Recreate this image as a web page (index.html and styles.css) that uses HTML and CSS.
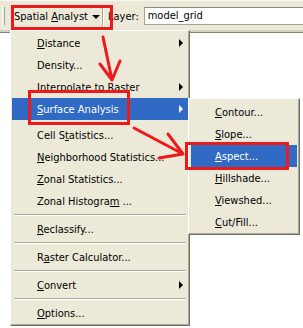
FILE: index.html
```html
<!DOCTYPE html>
<html lang="en">
<head>
    <meta charset="UTF-8">
    <title>Spatial Analyst menu</title>
    <link rel="stylesheet" href="styles.css">
</head>
<body>
    <div class="toolbar">
        <span class="grip"></span>
        <div class="sa-button"><span class="sa-text">Spatial <u>A</u>nalyst</span><span class="caret"></span></div>
        <span class="tb-sep"></span>
        <span class="layer-label">Layer:</span>
        <div class="layer-box">model_grid</div>
    </div>

    <div class="menu main-menu">
        <div class="item"><span class="label"><u>D</u>istance</span><span class="arrow"></span></div>
        <div class="item"><span class="label">Density...</span></div>
        <div class="item"><span class="label">Interpolate to Raster</span><span class="arrow"></span></div>
        <div class="item active"><span class="label"><u>S</u>urface Analysis</span><span class="arrow"></span></div>
        <div class="gap"></div>
        <div class="item"><span class="label">Cell S<u>t</u>atistics...</span></div>
        <div class="item"><span class="label"><u>N</u>eighborhood Statistics...</span></div>
        <div class="item"><span class="label"><u>Z</u>onal Statistics...</span></div>
        <div class="item"><span class="label">Zonal Histogra<u>m</u> ...</span></div>
        <div class="sep"></div>
        <div class="item"><span class="label"><u>R</u>eclassify...</span></div>
        <div class="sep"></div>
        <div class="item"><span class="label">R<u>a</u>ster Calculator...</span></div>
        <div class="sep"></div>
        <div class="item"><span class="label"><u>C</u>onvert</span><span class="arrow"></span></div>
        <div class="sep"></div>
        <div class="item"><span class="label"><u>O</u>ptions...</span></div>
    </div>

    <div class="menu sub-menu">
        <div class="item"><span class="label"><u>C</u>ontour...</span></div>
        <div class="item"><span class="label"><u>S</u>lope...</span></div>
        <div class="item active"><span class="label"><u>A</u>spect...</span></div>
        <div class="item"><span class="label"><u>H</u>illshade...</span></div>
        <div class="item"><span class="label"><u>V</u>iewshed...</span></div>
        <div class="item"><span class="label"><u>C</u>ut/Fill...</span></div>
    </div>

    <!-- red markup drawn over the screenshot -->
    <svg class="marks" width="303" height="328" viewBox="0 0 303 328">
        <g fill="none" stroke="#ee1a1a" stroke-width="3" stroke-linecap="round" stroke-linejoin="round">
            <rect x="12.5" y="6.5" width="99" height="22" stroke-linecap="butt" stroke-linejoin="miter"/>
            <rect x="29.5" y="91.5" width="99" height="32" stroke-linecap="butt" stroke-linejoin="miter"/>
            <rect x="186.5" y="143.5" width="101" height="25" stroke-linecap="butt" stroke-linejoin="miter"/>
            <path d="M103 37 L112 80 M100 64 L112 80 L120 61"/>
            <path d="M134 128 L183 154 M168 134 L183 154 L159 158"/>
        </g>
    </svg>
</body>
</html>
```

FILE: styles.css
```css
body {
    margin: 0;
    width: 303px;
    height: 328px;
    overflow: hidden;
    position: relative;
    background-color: #ffffff;
    font-family: "DejaVu Sans Condensed", "Liberation Sans", sans-serif;
    font-size: 11px;
    color: #000000;
}

u {
    text-decoration: underline;
    text-underline-offset: 1px;
}

.toolbar {
    height: 33px;
    box-sizing: border-box;
    display: flex;
    align-items: center;
    background-color: #ece9d8;
    border-bottom: 1px solid #8a877a;
    box-shadow: inset 0 1px 0 #f7f6ef, inset 0 -2px 0 #d3d0c0;
    white-space: nowrap;
}

.grip {
    width: 1px;
    height: 18px;
    margin-left: 2px;
    border-left: 1px solid #ffffff;
    border-right: 1px solid #aca899;
}

.sa-button {
    display: flex;
    align-items: center;
    margin-left: 9px;
    margin-top: 1px;
}

.caret {
    width: 0;
    height: 0;
    margin-left: 4px;
    border-top: 4px solid #000000;
    border-left: 4px solid transparent;
    border-right: 4px solid transparent;
}

.tb-sep {
    width: 0;
    height: 20px;
    margin-left: 2px;
    border-left: 1px solid #aca899;
    border-right: 1px solid #ffffff;
}

.layer-label {
    margin-left: 4px;
}

.layer-box {
    flex: 1;
    height: 18px;
    box-sizing: border-box;
    margin-left: 5px;
    margin-top: -1px;
    padding-left: 3px;
    line-height: 16px;
    background-color: #ffffff;
    border: 1px solid #a5a292;
    border-top-color: #8c8a7c;
    border-right: none;
}

/* dropdown menus */
.menu {
    position: absolute;
    box-sizing: border-box;
    background-color: #ece9d8;
    border: 1px solid;
    border-color: #ffffff #716f64 #716f64 #ffffff;
    box-shadow: inset -1px -1px 0 #aca899;
    white-space: nowrap;
}

.main-menu {
    left: 10px;
    top: 30px;
    width: 180px;
    padding: 1px;
}

.sub-menu {
    left: 188px;
    top: 98px;
    width: 112px;
    padding: 2px 2px 1px 2px;
}

.item {
    height: 22px;
    display: flex;
    align-items: center;
    padding-left: 25px;
}

.sub-menu .item {
    padding-left: 24px;
}

.item .label {
    flex: 1;
}

.item.active {
    background-color: #316ac5;
    color: #ffffff;
}

.arrow {
    width: 0;
    height: 0;
    margin-right: 5px;
    border-left: 4px solid #000000;
    border-top: 4px solid transparent;
    border-bottom: 4px solid transparent;
}

.item.active .arrow {
    border-left-color: #ffffff;
}

.sep {
    margin: 2px 2px;
    border-top: 1px solid #aca899;
    border-bottom: 1px solid #ffffff;
}

.gap {
    height: 4px;
}

.marks {
    position: absolute;
    left: 0;
    top: 0;
}
```
